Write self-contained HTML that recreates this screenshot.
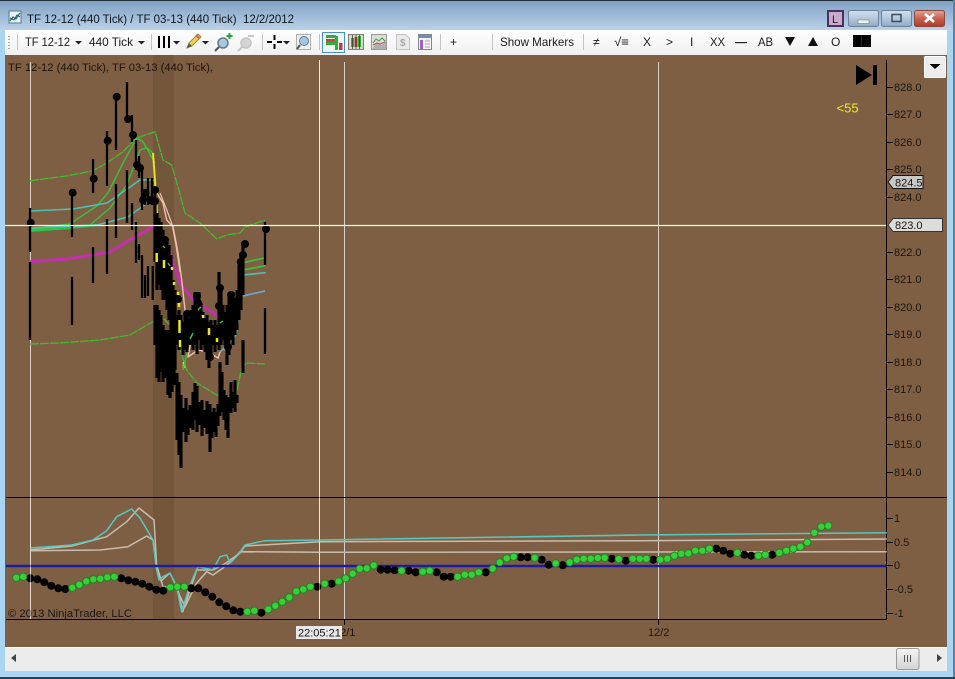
<!DOCTYPE html>
<html><head><meta charset="utf-8"><title>TF 12-12 chart</title>
<style>
html,body{margin:0;padding:0;background:#a9cfee;width:955px;height:679px;overflow:hidden}
svg{display:block}
text{font-family:"Liberation Sans",sans-serif}
.a{font-size:11px;fill:#1c1610}
.t{font-size:12px;fill:#1a1a1a}
</style></head><body>
<svg xmlns="http://www.w3.org/2000/svg" width="955" height="679" viewBox="0 0 955 679">
<defs>
<linearGradient id="top" x1="0" y1="0" x2="0" y2="1"><stop offset="0" stop-color="#7f9fc2"/><stop offset="1" stop-color="#bcd4ea"/></linearGradient>
<linearGradient id="tb" x1="0" y1="0" x2="0" y2="1"><stop offset="0" stop-color="#ffffff"/><stop offset="1" stop-color="#f0f0f0"/></linearGradient>
<linearGradient id="btn" x1="0" y1="0" x2="0" y2="1"><stop offset="0" stop-color="#d2dfec"/><stop offset=".5" stop-color="#b4c8dc"/><stop offset="1" stop-color="#8ea9c4"/></linearGradient>
<linearGradient id="cls" x1="0" y1="0" x2="0" y2="1"><stop offset="0" stop-color="#e3a597"/><stop offset=".5" stop-color="#c8604c"/><stop offset="1" stop-color="#b03a28"/></linearGradient>
<linearGradient id="thumb" x1="0" y1="0" x2="0" y2="1"><stop offset="0" stop-color="#f4f4f4"/><stop offset="1" stop-color="#d4d4d4"/></linearGradient>
</defs>
<!-- window frame -->
<rect width="955" height="679" fill="#a9d4f2"/>
<rect width="955" height="31" fill="url(#top)"/>
<rect width="955" height="1" fill="#22303c"/>
<rect x="953" width="2" height="679" fill="#5f8199"/>
<rect y="677" width="955" height="2" fill="#28404f"/>
<!-- title -->
<g transform="translate(9,11)"><rect width="12" height="12" fill="#e8f0f8" stroke="#5a7a8a"/><path d="M1 10L4 6L7 8L11 2" fill="none" stroke="#2a8a3a" stroke-width="1.3"/><path d="M1 7L5 9L8 4L11 6" fill="none" stroke="#2a4aa0"/></g>
<text x="27" y="23" font-size="12" fill="#10161c" textLength="267" lengthAdjust="spacingAndGlyphs" xml:space="preserve">TF 12-12 (440 Tick) / TF 03-13 (440 Tick)  12/2/2012</text>
<!-- window buttons -->
<rect x="828" y="11" width="15" height="15" fill="#c9aacb" stroke="#4a3060" stroke-width="2"/>
<text x="832" y="23" font-size="11" fill="#2a1a3a">L</text>
<rect x="848.500" y="10.500" width="30" height="16" rx="2" fill="url(#btn)" stroke="#6c8199"/>
<rect x="858" y="20" width="11" height="3.500" fill="#f2f6fa" stroke="#6c7f90" stroke-width=".6"/>
<rect x="881.500" y="10.500" width="30" height="16" rx="2" fill="url(#btn)" stroke="#6c8199"/>
<rect x="892" y="14.500" width="9" height="7" fill="none" stroke="#3c4c5c" stroke-width="1.500"/>
<rect x="914.500" y="10.500" width="30" height="16" rx="2" fill="url(#cls)" stroke="#8a4a40"/>
<path d="M925 14L934 22M934 14L925 22" stroke="#fff" stroke-width="2.800"/>
<!-- toolbar -->
<rect x="5" y="30" width="942" height="25.500" fill="url(#tb)"/>
<path d="M9 36v1M9 39v1M9 42v1M9 45v1M9 48v1" stroke="#a8a8a8" stroke-width="2"/>
<path d="M17.500 34v16M151.500 34v16M262.500 34v16M319.500 34v16M440.500 34v16M492.500 34v16M583.500 34v16" stroke="#c4c4c4"/>
<text class="t" x="25" y="46" textLength="45" lengthAdjust="spacingAndGlyphs">TF 12-12</text>
<path d="M75 41h7l-3.500 3.500zM138 41h7l-3.500 3.500zM173 41h7l-3.500 3.500zM202 41h7l-3.500 3.500zM283 41h7l-3.500 3.500z" fill="#222"/>
<text class="t" x="89" y="46" textLength="44" lengthAdjust="spacingAndGlyphs">440 Tick</text>
<path d="M159 36v12M164 36v12M169 36v12" stroke="#000" stroke-width="2"/>
<path d="M187 48l2-5 9-9 3 3-9 9z" fill="#f0d050" stroke="#a88a30"/><path d="M187 48l2-5 3 3z" fill="#555"/><path d="M196 35l3 3" stroke="#d06060" stroke-width="2"/>
<circle cx="223" cy="43" r="5" fill="#a8c8e0" stroke="#6a7a8a" stroke-width="1.500"/><path d="M219 47l-4 4" stroke="#555" stroke-width="2"/><path d="M226.500 36h6M229.500 33v6" stroke="#2aa040" stroke-width="2"/>
<circle cx="246" cy="43" r="5" fill="#d4d4d4" stroke="#c4c4c4" stroke-width="1.500"/><path d="M242 47l-4 4" stroke="#c4c4c4" stroke-width="2"/><path d="M248 36h6" stroke="#c8c8c8" stroke-width="2"/>
<path d="M274.500 35v5M274.500 44v5M267 42h5M277 42h5" stroke="#000" stroke-width="2"/>
<rect x="296.500" y="34.500" width="14" height="15" fill="#f0f0f0" stroke="#b0b0b0"/><circle cx="304" cy="41" r="4.500" fill="#a0c8e4" stroke="#6a7a8a"/><path d="M300 45l-3 4" stroke="#555" stroke-width="2"/>
<!-- active button -->
<rect x="322.500" y="32.500" width="22" height="20" fill="#eef5fb" stroke="#4a90c8"/>
<path d="M326 35h10v3h-10zM326 42h9v3h-9z" fill="#2faf3f"/><path d="M326 39h9v3h-9z" fill="#d04040"/>
<rect x="335" y="36" width="3" height="14" fill="#2faf3f"/><rect x="339" y="43" width="3.500" height="7" fill="#c83838"/>
<rect x="348.500" y="34.500" width="15" height="15" fill="#d8d8d0" stroke="#808080"/>
<path d="M351 38h3v9h-3zM358 36h3v11h-3z" fill="#38b038"/><path d="M354.500 37h3v10h-3z" fill="#c83838"/><path d="M352.500 35v14M356 35v14M359.500 35v14" stroke="#333" stroke-width=".7"/>
<rect x="371.500" y="34.500" width="15" height="15" fill="#dcdcd8" stroke="#9a9a9a"/><path d="M372 49l5-7 5 3 4-5v9z" fill="#b0b0b0"/><path d="M373 43l3-4 3 2 3-3 3 3" fill="none" stroke="#38a048"/><path d="M373 45l4-2 3 1 5-2" fill="none" stroke="#c85050"/>
<path d="M396.500 34.500h9l4 4v11h-13z" fill="#eaeaea" stroke="#c4c4c4"/><text x="400" y="46" font-size="10" font-weight="bold" fill="#a8a8a8">$</text>
<rect x="418.500" y="34.500" width="13" height="15" fill="#f4f4f4" stroke="#808890"/><rect x="419" y="35" width="12" height="3" fill="#6a90b8"/><rect x="420" y="40" width="3" height="9" fill="#a060d0"/><path d="M425 41h5M425 44h5M425 47h5" stroke="#a0a8b0"/>
<text class="t" x="450" y="46" font-size="12">+</text>
<text class="t" x="500" y="46" textLength="74" lengthAdjust="spacingAndGlyphs">Show Markers</text>
<text class="t" x="593" y="46">≠</text>
<text class="t" x="614" y="46" textLength="15" lengthAdjust="spacingAndGlyphs">√≡</text>
<text class="t" x="643" y="46">X</text>
<text class="t" x="666" y="46">&gt;</text>
<text class="t" x="690" y="46">I</text>
<text class="t" x="710" y="46" textLength="15" lengthAdjust="spacingAndGlyphs">XX</text>
<rect x="735" y="42" width="12" height="1.200" fill="#222"/>
<text class="t" x="758" y="46" textLength="15" lengthAdjust="spacingAndGlyphs">AB</text>
<path d="M785 37h10l-5 9zM808 46h10l-5-9z" fill="#111"/>
<text class="t" x="831" y="46">O</text>
<rect x="853" y="35" width="18" height="12" fill="#000"/><rect x="861" y="35" width="1" height="12" fill="#3a1a4a"/>
<!-- chart -->
<rect x="5" y="55" width="942" height="592" fill="#7f5f43"/>
<rect x="153" y="55" width="21" height="564" fill="#74563b"/>
<rect x="924.500" y="56.500" width="21" height="21" rx="1" fill="#ececec" stroke="#fff"/>
<path d="M929.500 64h11l-5.500 5z" fill="#000"/>
<path d="M856 65l16 10-16 10z" fill="#000"/><rect x="873" y="65" width="4" height="20" fill="#000"/>
<text x="836.500" y="112.500" font-size="13" fill="#f0e82a">&lt;55</text>
<text x="8" y="71" font-size="11" fill="#1e140c" textLength="205" lengthAdjust="spacingAndGlyphs">TF 12-12 (440 Tick), TF 03-13 (440 Tick),</text>
<!-- grid -->
<path d="M30.500 62V619M344.500 62V625M658.500 62V625" stroke="#d8d0c8" stroke-width="1"/>
<path d="M319.500 60V619" stroke="#f4f0ea"/>
<!-- axes -->
<path d="M6 497.500H947M6 619.500H886.500M886.500 60V619.500" stroke="#000"/>
<path d="M344.500 619v6M658.500 619v6" stroke="#000"/>
<path d="M886 87.500h7M886 114.500h7M886 142.500h7M886 169.500h7M886 197.500h7M886 252.500h7M886 279.500h7M886 307.500h7M886 334.500h7M886 362.500h7M886 389.500h7M886 417.500h7M886 444.500h7M886 472.500h7M886 518.500h7M886 542.500h7M886 565.500h7M886 589.500h7M886 613.500h7" stroke="#000"/>
<g class="a">
<text class="a" x="894" y="91">828.0</text><text class="a" x="894" y="118">827.0</text><text class="a" x="894" y="146">826.0</text><text class="a" x="894" y="173">825.0</text><text class="a" x="894" y="201">824.0</text><text class="a" x="894" y="256">822.0</text><text class="a" x="894" y="283">821.0</text><text class="a" x="894" y="311">820.0</text><text class="a" x="894" y="338">819.0</text><text class="a" x="894" y="366">818.0</text><text class="a" x="894" y="393">817.0</text><text class="a" x="894" y="421">816.0</text><text class="a" x="894" y="448">815.0</text><text class="a" x="894" y="476">814.0</text>
<text class="a" x="894" y="522">1</text><text class="a" x="894" y="546">0.5</text><text class="a" x="894" y="569">0</text><text class="a" x="894" y="593">-0.5</text><text class="a" x="894" y="617">-1</text>
<text class="a" x="8" y="617" textLength="124" lengthAdjust="spacingAndGlyphs">© 2013 NinjaTrader, LLC</text>
<text class="a" x="334" y="636">12/1</text><text class="a" x="648" y="636">12/2</text>
</g>
<!-- price lines -->
<g fill="none" stroke-linejoin="round">
<path d="M30 180.700L66.700 176L93 170.700L106.700 163L123 151.700L136.700 138L155 131.700L163 160L171.700 165L178 187L185 213L200 223L216.700 239L226.700 235L240 233L245 227L265 220" stroke="#46b832" stroke-width="1.300" stroke-dasharray="9 1"/>
<path d="M30 344L60 343L100 340L130 335L147 325L161.700 316.700L173 328L186.700 370L196.700 382.700L216.700 395L230 396.700L236.700 391.700L241.700 368L246.700 363L265 364" stroke="#46b832" stroke-width="1.300" stroke-dasharray="9 1"/>
<path d="M30 229L70 224L96.700 206L108 193L123 163L136.700 138L143 141.700L155 163" stroke="#3cc03c" stroke-width="1.400"/>
<path d="M30 230L90 225L110 208L126.700 185L140 150L146.700 147.700L153 153" stroke="#3cc03c" stroke-width="1.400"/>
<path d="M30 231L70 228L97 225" stroke="#28c850" stroke-width="2"/>
<path d="M243 262.700L265.700 257.700M243 270L265.700 265.700" stroke="#3cc03c" stroke-width="1.700"/>
<path d="M30 211L73 209L107 203L140 180L155 180" stroke="#4cc0b8" stroke-width="1.500"/>
<path d="M30 228L97 225L128 217L147 203L155 193" stroke="#4cc0b8" stroke-width="1.500"/>
<path d="M243 275L265.700 272.700" stroke="#4cc0b8" stroke-width="1.700"/>
<path d="M243 296L265 291" stroke="#6ea0d0" stroke-width="1.700"/>
<path d="M220 352L233 340L238 320" stroke="#4cc8c8" stroke-width="1.400"/>
<path d="M224 350L236 335L240 312" stroke="#4cc8c8" stroke-width="1.200"/>
<path d="M153 153L155 180L157 213" stroke="#e8e020" stroke-width="2"/>
<path d="M30 261.700L66.700 259L110 252L133 238L155 226L166.700 243L180 283L193 300L218 316L231.700 315L240 311.700" stroke="#c42eb0" stroke-width="3"/>
<path d="M156.700 192.700L163 203L166.700 220L173 226.700L178 253L181.700 280L185 310L193 330L188 357L198 350L208 352L218 358L220 352" stroke="#eec0b0" stroke-width="1.400"/>
<path d="M160 193L166 208L172 224L176 245L180 272" stroke="#eec0b0" stroke-width="1.200"/>
</g>
<!-- bars -->
<path stroke="#000" stroke-width="2.300" fill="none" d="M30 208V252M30 262V340M72 190V237M72 277V325M93 159V193M93 247V283M107 131V186M107 219V274M116 96V150M116 184V238M127 82V123M127 170V223M132 115V142M132 203V230M136 140V170M136 222V263M139 156V178M139 244V260M142 170V210M142 255V298M145 190V205M145 275V298M148 178V205M148 266V296M152 178V205M152.700 266V300M265 222V265M265 308V354"/>
<path stroke="#000" stroke-width="3.200" fill="none" d="M155 190V262M157 213V290M159 218V285M161 222V290M163 230V300M165 237V300M167 240V310M169 245V320M171 255V340M173 280V350M175 290V370
M155 305V345M157 305V378M159 310V382M161 315V372M163 325V382M165 330V378M168 330V395M170 335V398M172 340V392M174 345V385"/>
<path stroke="#000" stroke-width="3.100" fill="none" d="M177 373V440M179 382V455M181 395V468M184 408V432M186 398V442M188 410V435M190 405V428M193 392V430M195 383V420M197 386V432M200 402V425M202 400V436M205 410V428M207 401V434M210 404V452M212 412V438M214 408V432M216 412V437M218 404V426M220 362V392M220 392V416M222 372V412M224 390V420M226 395V430M228 397V438M231 382V413M233 392V408M235 380V412M237 395V403M243 340V373
M177 315V345M179 310V350M181 315V345M183 322V355M185 312V350M187 310V352M189 318V345M191 310V345M193 305V350M195 292V345M197 292V354M199 292V340M201 303V350M203 312V345M205 318V352M207 315V360M209 322V368M211 320V355M213 325V345M215 320V352M217 325V345M219 272V350M221 287V345M223 305V340M225 312V345M227 305V365M229 295V355M231 292V340M233 292V345M235 298V335M237 290V330M239 265V320M241 255V310M243 245V295"/>
<path stroke="#000" stroke-width="8" stroke-linecap="round" fill="none" d="M30.700 222.700h0M72.700 192.700h0M93.700 178.700h0M107.700 140.700h0M116.700 96.700h0M128 119h0M133 135h0M137 165h0M140 168h0M143 200h0M145.500 192.700h0M150 200h0M155 201h0M155 190h0M266 229h0M245 244h0M243 255h0M240.700 262h0M197 296h0M198 303h0M187 314h0M228 347h0M210 357h0M177 333h0M161 257h0M165 240h0M160 232h0M165 288h0M173 298h0M178 299h0M179 322h0M179 336h0M220 288h0M231 295h0M219 306h0"/>
<path stroke="#ece428" stroke-width="2.500" fill="none" d="M156.700 253v9M164 260v8M172 267v3M174 282v3M178 292v3M179 303v4M179.500 320v13M180 340v7M184 362v6M209 328v7M203 315v3M217 338v4"/>
<path stroke="#3cc03c" stroke-width="1.500" fill="none" d="M163 246l2 2M168 263l2 3M198 310l3-3M193 333l-3 6M220 323l3-2M187 353l-4 17"/>
<!-- crosshair -->
<path d="M5 225.500H886" stroke="#f6f2ea" stroke-width="1.200"/>
<!-- tags -->
<path d="M888 182l5-6.500h30v13h-30z" fill="#c8c8c8" stroke="#111"/>
<text class="a" x="895" y="186.500">824.5</text>
<path d="M888 225l5-6.500h49.500v13h-49.500z" fill="#dcdcdc" stroke="#333"/>
<text class="a" x="895" y="229">823.0</text>
<!-- lower panel -->
<g fill="none" stroke-linejoin="round">
<path d="M30 550.700L100 550L128 546.700L146.700 536L153 540L156 563L163 586.700L176 588L185 606.700L196.700 583L206.700 571.700L213 575L223 568L233 560L240 551.700L320 552.300L886.700 551.700" stroke="#c8bcb0" stroke-width="1.500"/>
<path d="M30 550L71.700 546L106.700 536.700L126.700 521.700L139 508L154 520L156.700 566.700L161 581L170 573L178 590L182.700 611.700L196.700 570L213 570L226 563L240 553L245 546L320 541.700L640 540.700L886.700 539" stroke="#c8bcb0" stroke-width="1.500"/>
<path d="M30 548L71.700 545L93 540L106.700 530.700L116.700 516.700L131.700 509L140 518L153 540L156 566.700L159 580L163 576.700L170 573L176.700 586.700L181.700 611.700L190 585L198 566.700L213 570L220 556.700L226.700 555L230 563L238 555L245 545L265 540.700L320 540L640 535L886.700 532.700" stroke="#56c8c0" stroke-width="1.500"/>
</g>
<path d="M6 566H886" stroke="#1c1ca0" stroke-width="2.400"/>
<path fill="none" stroke="#000" stroke-width="8" stroke-linecap="round" d="M30.300 578.300h0M37.300 579.300h0M44.300 582.300h0M51.300 585.700h0M58.300 588.300h0M65.300 589h0M121.300 578.300h0M128.300 580.300h0M135.300 581.700h0M142.300 583.700h0M149.300 586.700h0M156.300 589.700h0M163.300 590.700h0M191.300 588.300h0M198.300 588.300h0M205.300 592.300h0M212.300 596.700h0M219.300 602.300h0M226.300 606.300h0M233.300 610.300h0M240.300 611.700h0M261.300 612.700h0M317.300 586.700h0M331.700 583.700h0M380.700 569.700h0M387.700 569.700h0M394.700 570.300h0M408.700 570.700h0M415.700 572.300h0M436.700 572.300h0M443.700 576.700h0M450.700 576.700h0M485.700 572.300h0M520.700 557.300h0M527.700 557.300h0M541.700 559.700h0M548.700 564.700h0M562.700 565.300h0M611.700 558.700h0M625.700 560.700h0M653.300 559.700h0M716.300 548.700h0M723.300 550.700h0M730.300 553.700h0M744.300 554.700h0M751.300 555.700h0M772.300 554.700h0"/>
<g fill="none" stroke-linecap="round">
<path stroke="#1f7f25" stroke-width="8.200" d="M16.300 577.700h0M23.300 576.700h0M72.300 587.700h0M79.300 584.700h0M86.300 581.300h0M93.300 579.300h0M100.300 578.700h0M107.300 577.300h0M114.300 576.700h0M170.300 587.300h0M177.300 586.700h0M184.300 586.700h0M247.300 611.700h0M254.300 610.700h0M268.300 609.300h0M275.300 605.700h0M282.300 601.700h0M289.300 597.300h0M296.300 591.300h0M303.300 589.300h0M310.300 586.700h0M324.700 583.700h0M338.700 581.300h0M345.700 578.300h0M352.700 573.700h0M359.700 568.700h0M366.700 568.300h0M373.700 565.300h0M401.700 570.700h0M422.700 571.700h0M429.700 570.700h0M457.700 576.700h0M464.700 574.700h0M471.700 574.700h0M478.700 572.300h0M492.700 568.700h0M499.700 562.300h0M506.700 558.300h0M513.700 556.700h0M534.700 557.700h0M555.700 563.300h0M569.700 562.300h0M576.700 559.700h0M583.700 558.700h0M590.700 558.700h0M597.700 558h0M604.700 557.700h0M618.700 559h0M632.700 558.700h0M639.700 558.700h0M646.300 558.700h0M660.300 559.700h0M667.300 558.700h0M674.300 555.700h0M681.300 553.700h0M688.300 553.300h0M695.300 550.700h0M702.300 550.700h0M709.300 548.700h0M737.300 552.700h0M758.300 555.700h0M765.300 554.700h0M779.300 552.700h0M786.300 550.700h0M793.300 548.700h0M800.300 546.700h0M807.300 542.300h0M814.300 532.700h0M821.300 526.700h0M828.300 525.700h0"/>
<path stroke="#38d038" stroke-width="6.400" d="M16.300 577.700h0M23.300 576.700h0M72.300 587.700h0M79.300 584.700h0M86.300 581.300h0M93.300 579.300h0M100.300 578.700h0M107.300 577.300h0M114.300 576.700h0M170.300 587.300h0M177.300 586.700h0M184.300 586.700h0M247.300 611.700h0M254.300 610.700h0M268.300 609.300h0M275.300 605.700h0M282.300 601.700h0M289.300 597.300h0M296.300 591.300h0M303.300 589.300h0M310.300 586.700h0M324.700 583.700h0M338.700 581.300h0M345.700 578.300h0M352.700 573.700h0M359.700 568.700h0M366.700 568.300h0M373.700 565.300h0M401.700 570.700h0M422.700 571.700h0M429.700 570.700h0M457.700 576.700h0M464.700 574.700h0M471.700 574.700h0M478.700 572.300h0M492.700 568.700h0M499.700 562.300h0M506.700 558.300h0M513.700 556.700h0M534.700 557.700h0M555.700 563.300h0M569.700 562.300h0M576.700 559.700h0M583.700 558.700h0M590.700 558.700h0M597.700 558h0M604.700 557.700h0M618.700 559h0M632.700 558.700h0M639.700 558.700h0M646.300 558.700h0M660.300 559.700h0M667.300 558.700h0M674.300 555.700h0M681.300 553.700h0M688.300 553.300h0M695.300 550.700h0M702.300 550.700h0M709.300 548.700h0M737.300 552.700h0M758.300 555.700h0M765.300 554.700h0M779.300 552.700h0M786.300 550.700h0M793.300 548.700h0M800.300 546.700h0M807.300 542.300h0M814.300 532.700h0M821.300 526.700h0M828.300 525.700h0"/>
</g>
<!-- redraw crosshair verticals faintly over panel dots -->
<path d="M30.500 497V619M319.500 497V619" stroke="#e8e4dc" stroke-opacity=".55"/>
<!-- time label -->
<rect x="296" y="626" width="46" height="13" fill="#e8e8e8"/>
<text class="a" x="298" y="636.500" style="fill:#111">22:05:21</text>
<!-- scrollbar -->
<rect x="5" y="647" width="942" height="24" fill="#ececec"/>
<rect x="5" y="647" width="942" height="1" fill="#f8f8f8"/>
<path d="M16 654v8l-5-4z" fill="#444"/>
<rect x="896.500" y="648.500" width="22.500" height="21" rx="2" fill="url(#thumb)" stroke="#9a9a9a"/>
<path d="M904.500 655v7M907.500 655v7M910.500 655v7" stroke="#555"/>
<path d="M937 654v8l5-4z" fill="#444"/>
</svg>
</body></html>
